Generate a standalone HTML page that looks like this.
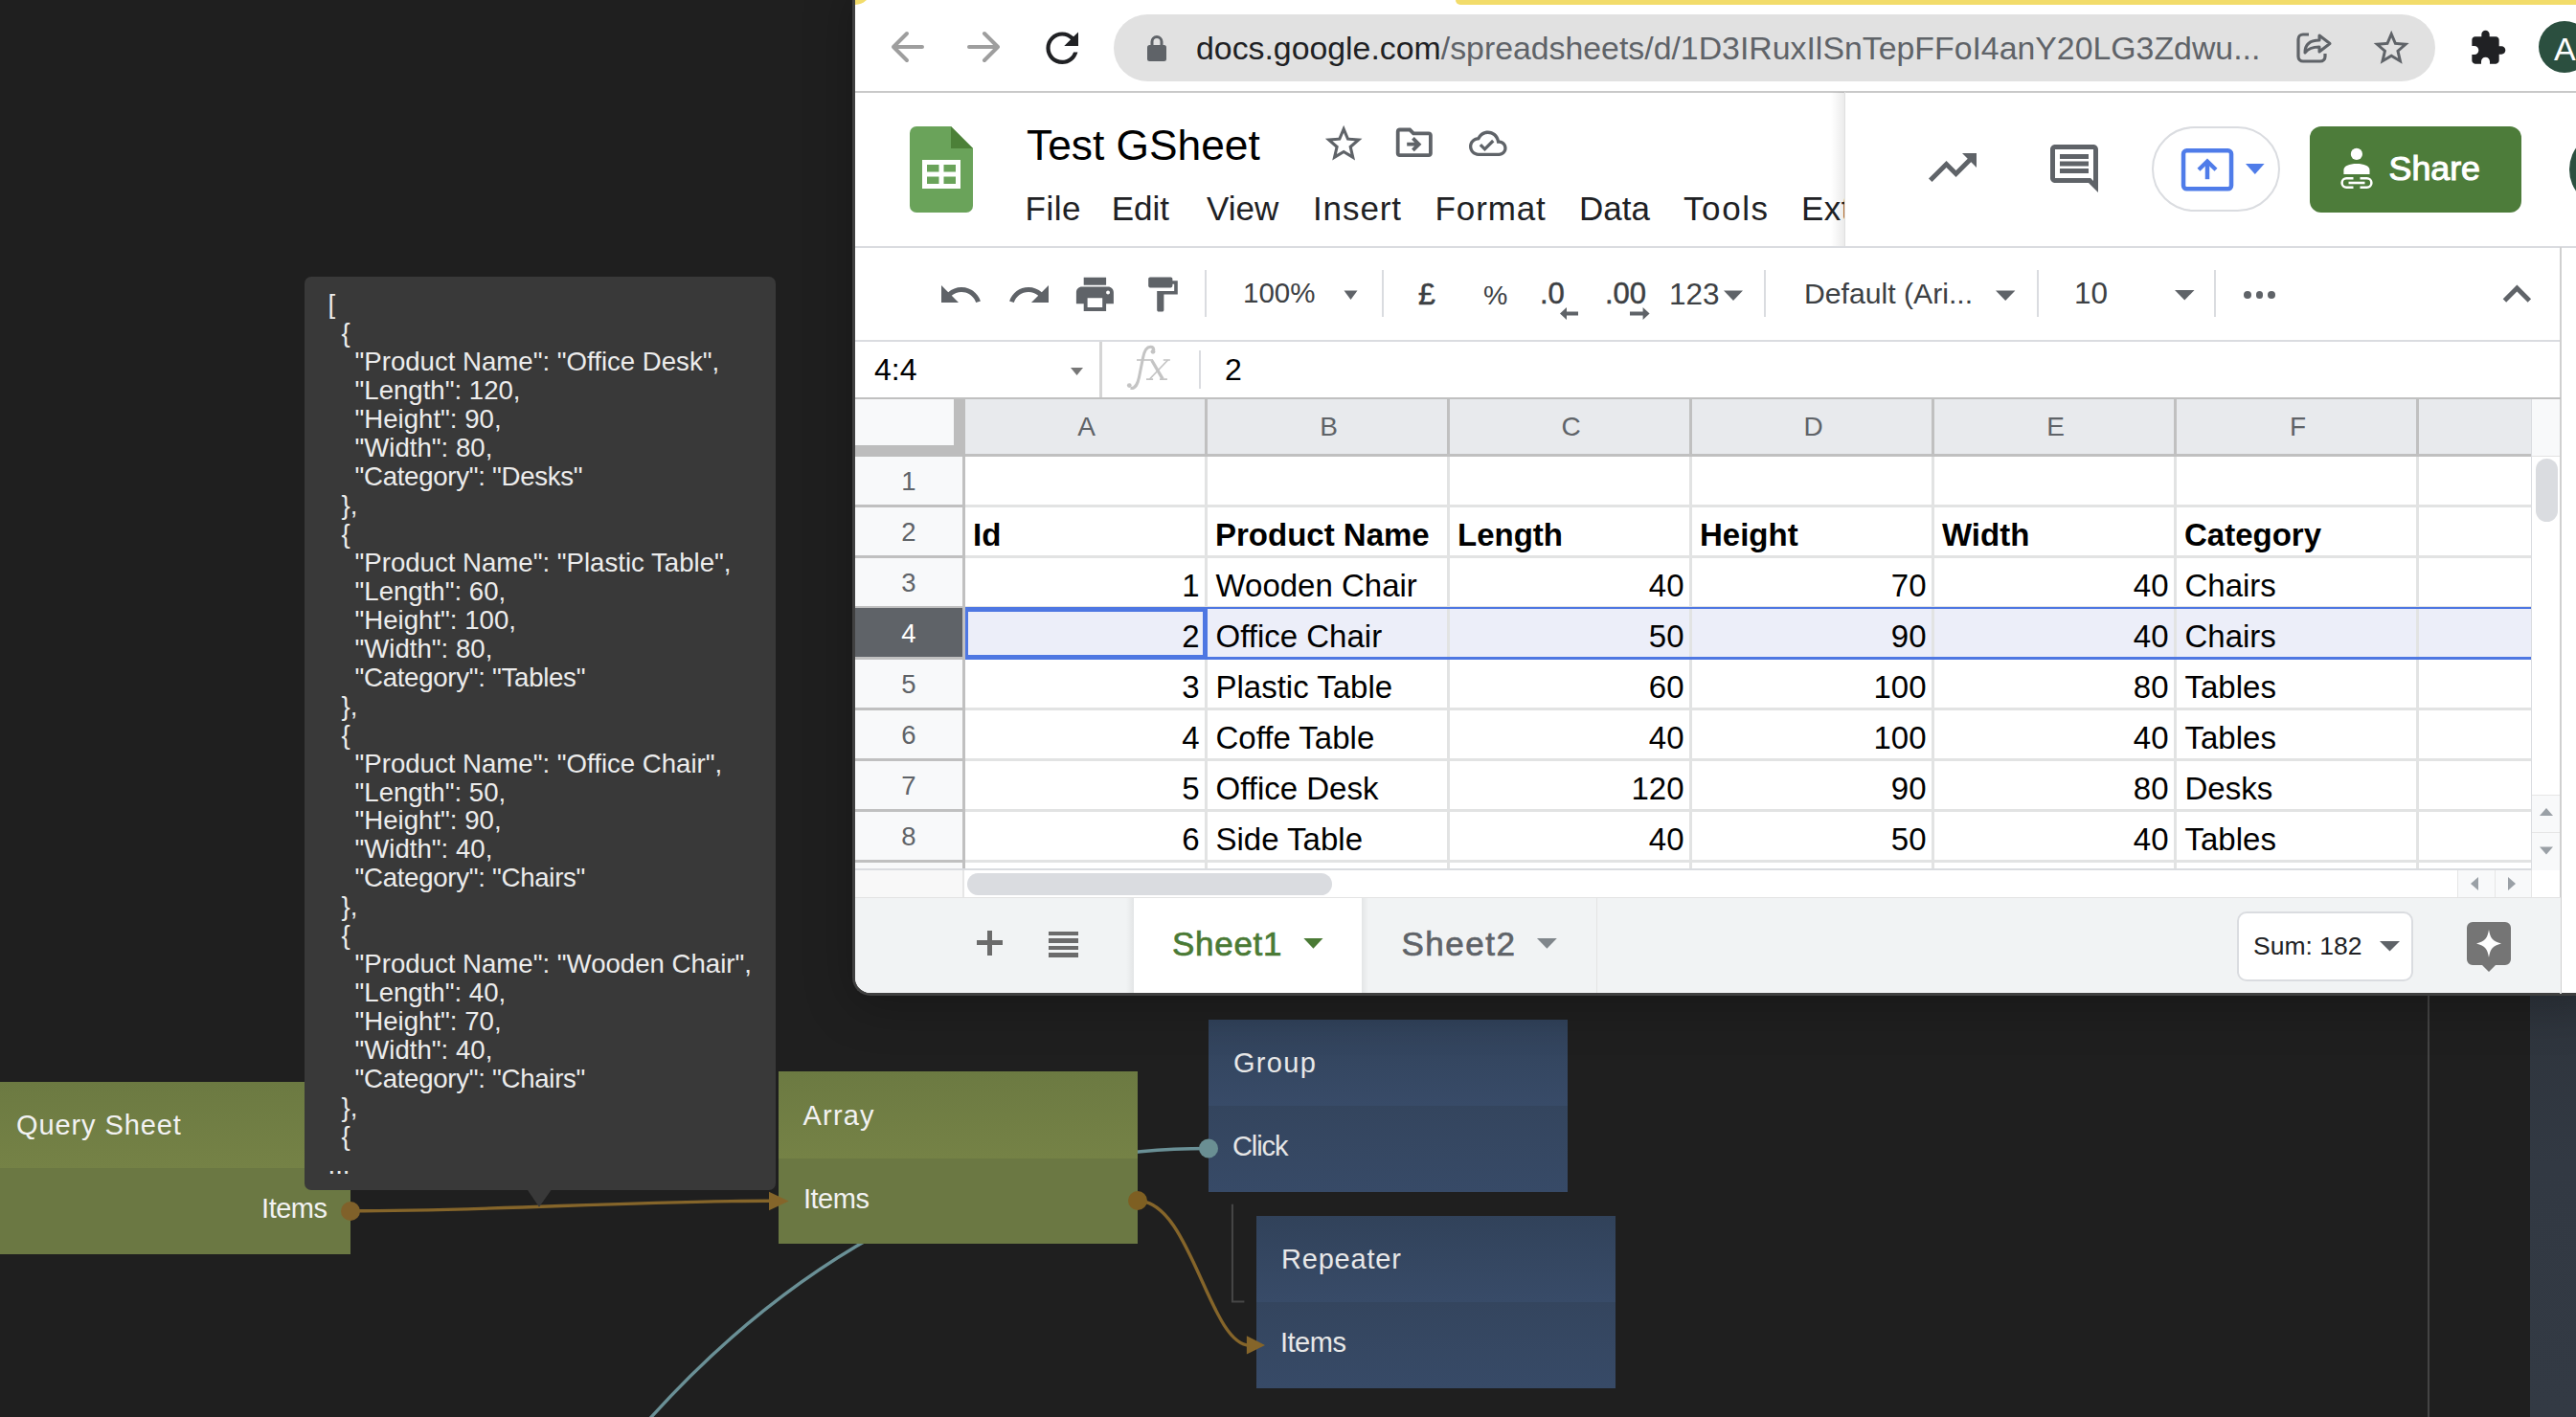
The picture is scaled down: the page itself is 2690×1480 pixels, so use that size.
<!DOCTYPE html>
<html><head><meta charset="utf-8"><title>Noodl + Google Sheets</title>
<style>
html,body{margin:0;padding:0;}
body{width:2690px;height:1480px;position:relative;overflow:hidden;background:#1f1f1f;font-family:"Liberation Sans",sans-serif;}
</style></head><body>
<div style="position:absolute;left:2535px;top:1040px;width:2px;height:440px;background:#444444"></div><div style="position:absolute;left:2642px;top:1040px;width:48px;height:440px;background:linear-gradient(#2e343c 0%,#323943 40%,#333a44 100%)"></div><svg style="position:absolute;left:0;top:0" width="2690" height="1480" viewBox="0 0 2690 1480">
<path d="M428.2,1876.9 C730.7,1215.5 1143.3,1199.5 1262,1199.5" fill="none" stroke="#6a9096" stroke-width="3.4"/>
</svg><div style="position:absolute;left:-10px;top:1130px;width:376px;height:90px;background:linear-gradient(#6c7a42,#758246)"></div><div style="position:absolute;left:-10px;top:1220px;width:376px;height:90px;background:#6b7843"></div><div style="position:absolute;left:17px;top:1158.5px;font-family:'Liberation Sans',sans-serif;font-size:29px;line-height:33.3px;color:#f2f2f2;font-weight:400;white-space:pre;letter-spacing:0.9px">Query Sheet</div><div style="position:absolute;right:2348.5px;top:1246.2px;font-family:'Liberation Sans',sans-serif;font-size:29px;line-height:33.3px;color:#f2f2f2;font-weight:400;white-space:pre;text-align:right;letter-spacing:-0.5px">Items</div><div style="position:absolute;left:813px;top:1119px;width:375px;height:90.5px;background:linear-gradient(#6c7a42,#758246)"></div><div style="position:absolute;left:813px;top:1209.5px;width:375px;height:89.5px;background:#6b7843"></div><div style="position:absolute;left:838.5px;top:1148.8px;font-family:'Liberation Sans',sans-serif;font-size:29px;line-height:33.3px;color:#f2f2f2;font-weight:400;white-space:pre;letter-spacing:1.2px">Array</div><div style="position:absolute;left:839px;top:1235.8px;font-family:'Liberation Sans',sans-serif;font-size:29px;line-height:33.3px;color:#f2f2f2;font-weight:400;white-space:pre;letter-spacing:-0.5px">Items</div><div style="position:absolute;left:1262px;top:1065px;width:375px;height:90px;background:linear-gradient(#31425a,#384b68)"></div><div style="position:absolute;left:1262px;top:1155px;width:375px;height:90px;background:linear-gradient(#34455e,#374a67)"></div><div style="position:absolute;left:1288px;top:1094.4px;font-family:'Liberation Sans',sans-serif;font-size:29px;line-height:33.3px;color:#e8e8e8;font-weight:400;white-space:pre;letter-spacing:1.3px">Group</div><div style="position:absolute;left:1287px;top:1180.8px;font-family:'Liberation Sans',sans-serif;font-size:29px;line-height:33.3px;color:#e6e6e6;font-weight:400;white-space:pre;letter-spacing:-1.1px">Click</div><div style="position:absolute;left:1312px;top:1270px;width:375px;height:90px;background:linear-gradient(#31425a,#384b68)"></div><div style="position:absolute;left:1312px;top:1360px;width:375px;height:89.5px;background:linear-gradient(#34455e,#374a67)"></div><div style="position:absolute;left:1338px;top:1299.1px;font-family:'Liberation Sans',sans-serif;font-size:29px;line-height:33.3px;color:#e8e8e8;font-weight:400;white-space:pre;letter-spacing:0.8px">Repeater</div><div style="position:absolute;left:1337px;top:1386.1px;font-family:'Liberation Sans',sans-serif;font-size:29px;line-height:33.3px;color:#e8e8e8;font-weight:400;white-space:pre;letter-spacing:-0.5px">Items</div><svg style="position:absolute;left:0;top:0" width="2690" height="1480" viewBox="0 0 2690 1480">
<path d="M1286.9,1257.8 V1359.5 H1299.4" fill="none" stroke="#474747" stroke-width="2"/>
<path d="M366.2,1264.8 C516.2,1264.8 656,1254.3 806,1254.3" fill="none" stroke="#85652a" stroke-width="3.4"/>
<path d="M803,1244.7 L823.6,1254.4 L803,1264.2 Z" fill="#85652a"/>
<path d="M1188.3,1254.2 C1243.5,1254.2 1262.8,1405.1 1305,1405.1" fill="none" stroke="#85652a" stroke-width="3.4"/>
<path d="M1301.9,1395.2 L1321,1405.1 L1301.9,1414.6 Z" fill="#85652a"/>
<circle cx="366" cy="1265" r="10" fill="#80612a"/>
<circle cx="1188" cy="1254" r="10" fill="#7e5f22"/>
<circle cx="1262" cy="1199.5" r="10" fill="#6a8f93"/>
</svg><div style="position:absolute;left:317.5px;top:288.5px;width:492px;height:954.5px;background:#393939;border-radius:7px"></div><svg style="position:absolute;left:0;top:0" width="2690" height="1480" viewBox="0 0 2690 1480"><path d="M551,1243 L575.5,1243 L563,1260.7 Z" fill="#393939"/></svg><div style="position:absolute;left:342.5px;top:302.3px;font-family:'Liberation Sans',sans-serif;font-size:27.6px;line-height:31.7px;color:#ececec;font-weight:400;white-space:pre;">[</div><div style="position:absolute;left:356.5px;top:332.3px;font-family:'Liberation Sans',sans-serif;font-size:27.6px;line-height:31.7px;color:#ececec;font-weight:400;white-space:pre;">{</div><div style="position:absolute;left:370.5px;top:362.2px;font-family:'Liberation Sans',sans-serif;font-size:27.6px;line-height:31.7px;color:#ececec;font-weight:400;white-space:pre;">&quot;Product Name&quot;: &quot;Office Desk&quot;,</div><div style="position:absolute;left:370.5px;top:392.2px;font-family:'Liberation Sans',sans-serif;font-size:27.6px;line-height:31.7px;color:#ececec;font-weight:400;white-space:pre;">&quot;Length&quot;: 120,</div><div style="position:absolute;left:370.5px;top:422.1px;font-family:'Liberation Sans',sans-serif;font-size:27.6px;line-height:31.7px;color:#ececec;font-weight:400;white-space:pre;">&quot;Height&quot;: 90,</div><div style="position:absolute;left:370.5px;top:452.1px;font-family:'Liberation Sans',sans-serif;font-size:27.6px;line-height:31.7px;color:#ececec;font-weight:400;white-space:pre;">&quot;Width&quot;: 80,</div><div style="position:absolute;left:370.5px;top:482.0px;font-family:'Liberation Sans',sans-serif;font-size:27.6px;line-height:31.7px;color:#ececec;font-weight:400;white-space:pre;letter-spacing:-0.28px">&quot;Category&quot;: &quot;Desks&quot;</div><div style="position:absolute;left:356.5px;top:512.0px;font-family:'Liberation Sans',sans-serif;font-size:27.6px;line-height:31.7px;color:#ececec;font-weight:400;white-space:pre;">},</div><div style="position:absolute;left:356.5px;top:541.9px;font-family:'Liberation Sans',sans-serif;font-size:27.6px;line-height:31.7px;color:#ececec;font-weight:400;white-space:pre;">{</div><div style="position:absolute;left:370.5px;top:571.9px;font-family:'Liberation Sans',sans-serif;font-size:27.6px;line-height:31.7px;color:#ececec;font-weight:400;white-space:pre;">&quot;Product Name&quot;: &quot;Plastic Table&quot;,</div><div style="position:absolute;left:370.5px;top:601.8px;font-family:'Liberation Sans',sans-serif;font-size:27.6px;line-height:31.7px;color:#ececec;font-weight:400;white-space:pre;">&quot;Length&quot;: 60,</div><div style="position:absolute;left:370.5px;top:631.8px;font-family:'Liberation Sans',sans-serif;font-size:27.6px;line-height:31.7px;color:#ececec;font-weight:400;white-space:pre;">&quot;Height&quot;: 100,</div><div style="position:absolute;left:370.5px;top:661.7px;font-family:'Liberation Sans',sans-serif;font-size:27.6px;line-height:31.7px;color:#ececec;font-weight:400;white-space:pre;">&quot;Width&quot;: 80,</div><div style="position:absolute;left:370.5px;top:691.7px;font-family:'Liberation Sans',sans-serif;font-size:27.6px;line-height:31.7px;color:#ececec;font-weight:400;white-space:pre;letter-spacing:-0.28px">&quot;Category&quot;: &quot;Tables&quot;</div><div style="position:absolute;left:356.5px;top:721.6px;font-family:'Liberation Sans',sans-serif;font-size:27.6px;line-height:31.7px;color:#ececec;font-weight:400;white-space:pre;">},</div><div style="position:absolute;left:356.5px;top:751.6px;font-family:'Liberation Sans',sans-serif;font-size:27.6px;line-height:31.7px;color:#ececec;font-weight:400;white-space:pre;">{</div><div style="position:absolute;left:370.5px;top:781.5px;font-family:'Liberation Sans',sans-serif;font-size:27.6px;line-height:31.7px;color:#ececec;font-weight:400;white-space:pre;">&quot;Product Name&quot;: &quot;Office Chair&quot;,</div><div style="position:absolute;left:370.5px;top:811.5px;font-family:'Liberation Sans',sans-serif;font-size:27.6px;line-height:31.7px;color:#ececec;font-weight:400;white-space:pre;">&quot;Length&quot;: 50,</div><div style="position:absolute;left:370.5px;top:841.4px;font-family:'Liberation Sans',sans-serif;font-size:27.6px;line-height:31.7px;color:#ececec;font-weight:400;white-space:pre;">&quot;Height&quot;: 90,</div><div style="position:absolute;left:370.5px;top:871.4px;font-family:'Liberation Sans',sans-serif;font-size:27.6px;line-height:31.7px;color:#ececec;font-weight:400;white-space:pre;">&quot;Width&quot;: 40,</div><div style="position:absolute;left:370.5px;top:901.3px;font-family:'Liberation Sans',sans-serif;font-size:27.6px;line-height:31.7px;color:#ececec;font-weight:400;white-space:pre;letter-spacing:-0.28px">&quot;Category&quot;: &quot;Chairs&quot;</div><div style="position:absolute;left:356.5px;top:931.3px;font-family:'Liberation Sans',sans-serif;font-size:27.6px;line-height:31.7px;color:#ececec;font-weight:400;white-space:pre;">},</div><div style="position:absolute;left:356.5px;top:961.2px;font-family:'Liberation Sans',sans-serif;font-size:27.6px;line-height:31.7px;color:#ececec;font-weight:400;white-space:pre;">{</div><div style="position:absolute;left:370.5px;top:991.2px;font-family:'Liberation Sans',sans-serif;font-size:27.6px;line-height:31.7px;color:#ececec;font-weight:400;white-space:pre;">&quot;Product Name&quot;: &quot;Wooden Chair&quot;,</div><div style="position:absolute;left:370.5px;top:1021.1px;font-family:'Liberation Sans',sans-serif;font-size:27.6px;line-height:31.7px;color:#ececec;font-weight:400;white-space:pre;">&quot;Length&quot;: 40,</div><div style="position:absolute;left:370.5px;top:1051.1px;font-family:'Liberation Sans',sans-serif;font-size:27.6px;line-height:31.7px;color:#ececec;font-weight:400;white-space:pre;">&quot;Height&quot;: 70,</div><div style="position:absolute;left:370.5px;top:1081.0px;font-family:'Liberation Sans',sans-serif;font-size:27.6px;line-height:31.7px;color:#ececec;font-weight:400;white-space:pre;">&quot;Width&quot;: 40,</div><div style="position:absolute;left:370.5px;top:1111.0px;font-family:'Liberation Sans',sans-serif;font-size:27.6px;line-height:31.7px;color:#ececec;font-weight:400;white-space:pre;letter-spacing:-0.28px">&quot;Category&quot;: &quot;Chairs&quot;</div><div style="position:absolute;left:356.5px;top:1140.9px;font-family:'Liberation Sans',sans-serif;font-size:27.6px;line-height:31.7px;color:#ececec;font-weight:400;white-space:pre;">},</div><div style="position:absolute;left:356.5px;top:1170.9px;font-family:'Liberation Sans',sans-serif;font-size:27.6px;line-height:31.7px;color:#ececec;font-weight:400;white-space:pre;">{</div><div style="position:absolute;left:342.5px;top:1200.8px;font-family:'Liberation Sans',sans-serif;font-size:27.6px;line-height:31.7px;color:#ececec;font-weight:400;white-space:pre;">...</div><div style="position:absolute;left:890px;top:-20px;width:1820px;height:1057px;background:#ffffff;border-left:3px solid #404040;border-bottom:3px solid #404040;border-bottom-left-radius:19px;overflow:hidden;box-shadow:0 10px 50px rgba(0,0,0,0.25)"></div><div style="position:absolute;left:893px;top:-10px;width:16px;height:15px;background:#f2dc6b;border-bottom-right-radius:16px 15px"></div><div style="position:absolute;left:1520px;top:0px;width:1170px;height:5px;background:#f2dc6b;border-bottom-left-radius:6px"></div><svg style="position:absolute;left:0;top:0" width="2690" height="120" viewBox="0 0 2690 120">
<g fill="none" stroke="#9e9e9e" stroke-width="4" stroke-linecap="round" stroke-linejoin="round">
<path d="M947,35 L933,49 L947,63 M933,49 H963"/>
<path d="M1028,35 L1042,49 L1028,63 M1042,49 H1012"/>
</g>
</svg><svg style="position:absolute;left:1083.6px;top:24.6px" width="50.4" height="50.4" viewBox="0 0 24 24"><path d="M17.65 6.35C16.2 4.9 14.21 4 12 4c-4.42 0-7.99 3.58-7.99 8s3.57 8 7.99 8c3.73 0 6.84-2.55 7.73-6h-2.08c-.82 2.33-3.04 4-5.65 4-3.31 0-6-2.69-6-6s2.69-6 6-6c1.66 0 3.14.69 4.22 1.78L13 11h7V4l-2.35 2.35z" fill="#202124" /></svg><div style="position:absolute;left:1163px;top:15px;width:1380px;height:70px;background:#e1e1e1;border-radius:35px"></div><svg style="position:absolute;left:1190px;top:30px" width="36" height="40" viewBox="0 0 36 40">
<path d="M13,18 V13.5 A5,5 0 0 1 23,13.5 V18" fill="none" stroke="#5f6368" stroke-width="3"/>
<rect x="8" y="17" width="20" height="17" rx="2.5" fill="#5f6368"/>
</svg><div style="position:absolute;left:1249px;top:31.4px;font-family:'Liberation Sans',sans-serif;font-size:33.85px;line-height:38.9px;color:#5f6368;font-weight:400;white-space:pre;"><span style="color:#202124">docs.google.com</span>/spreadsheets/d/1D3IRuxIlSnTepFFoI4anY20LG3Zdwu...</div><svg style="position:absolute;left:2395px;top:28px" width="46" height="42" viewBox="0 0 46 42">
<path d="M16,8 H10 A5,5 0 0 0 5,13 V31 A5,5 0 0 0 10,36 H28 A5,5 0 0 0 33,31 V28" fill="none" stroke="#5f6368" stroke-width="3.2"/>
<path d="M12,27 C12,18 18,14 27,14 V9 L38,17.5 L27,26 V21 C20,21 15,23 12,27 Z" fill="none" stroke="#5f6368" stroke-width="3" stroke-linejoin="round"/>
</svg><svg style="position:absolute;left:2475.3px;top:28.3px" width="44.4" height="44.4" viewBox="0 0 24 24"><path d="M22 9.24l-7.19-.62L12 2 9.19 8.63 2 9.24l5.46 4.73L5.82 21 12 17.27 18.18 21l-1.63-7.03L22 9.24zM12 15.4l-3.76 2.27 1-4.28-3.32-2.88 4.38-.38L12 6.1l1.71 4.04 4.38.38-3.32 2.88 1 4.28L12 15.4z" fill="#5f6368" /></svg><svg style="position:absolute;left:2577.7px;top:30.3px" width="40.0" height="40.0" viewBox="0 0 24 24"><path d="M20.5 11H19V7c0-1.1-.9-2-2-2h-4V3.5C13 2.12 11.88 1 10.5 1S8 2.12 8 3.5V5H4c-1.1 0-1.99.9-1.99 2v3.8H3.5c1.49 0 2.7 1.21 2.7 2.7s-1.21 2.7-2.7 2.7H2V20c0 1.1.9 2 2 2h3.8v-1.5c0-1.49 1.21-2.7 2.7-2.7 1.49 0 2.7 1.21 2.7 2.7V22H17c1.1 0 2-.9 2-2v-4h1.5c1.38 0 2.5-1.12 2.5-2.5S21.88 11 20.5 11z" fill="#202124" /></svg><div style="position:absolute;left:2651px;top:22px;width:54px;height:54px;background:#2b4f3f;border-radius:50%"></div><div style="position:absolute;left:2667px;top:32.2px;font-family:'Liberation Sans',sans-serif;font-size:34px;line-height:39.1px;color:#ffffff;font-weight:400;white-space:pre;">A</div><div style="position:absolute;left:893px;top:95px;width:1797px;height:2px;background:#c9c9c9"></div><svg style="position:absolute;left:950px;top:132px" width="66" height="90" viewBox="0 0 66 90">
<path d="M7,0 H43 L66,23 V83 A7,7 0 0 1 59,90 H7 A7,7 0 0 1 0,83 V7 A7,7 0 0 1 7,0 Z" fill="#6aa35a"/>
<path d="M43,0 L66,23 H43 Z" fill="#4c8038"/>
<rect x="13" y="35" width="40" height="30" fill="#ffffff"/>
<rect x="18" y="40" width="12.5" height="7.5" fill="#6aa35a"/>
<rect x="35.5" y="40" width="12.5" height="7.5" fill="#6aa35a"/>
<rect x="18" y="52.5" width="12.5" height="7.5" fill="#6aa35a"/>
<rect x="35.5" y="52.5" width="12.5" height="7.5" fill="#6aa35a"/>
</svg><div style="position:absolute;left:1072px;top:127.4px;font-family:'Liberation Sans',sans-serif;font-size:44.3px;line-height:50.9px;color:#000000;font-weight:400;white-space:pre;">Test GSheet</div><svg style="position:absolute;left:1380.0px;top:126.6px" width="46.3" height="46.3" viewBox="0 0 24 24"><path d="M22 9.24l-7.19-.62L12 2 9.19 8.63 2 9.24l5.46 4.73L5.82 21 12 17.27 18.18 21l-1.63-7.03L22 9.24zM12 15.4l-3.76 2.27 1-4.28-3.32-2.88 4.38-.38L12 6.1l1.71 4.04 4.38.38-3.32 2.88 1 4.28L12 15.4z" fill="#5f6368" /></svg><svg style="position:absolute;left:1454.2px;top:126.4px" width="45.6" height="45.6" viewBox="0 0 24 24"><path d="M20 6h-8l-2-2H4c-1.1 0-1.99.9-1.99 2L2 18c0 1.1.9 2 2 2h16c1.1 0 2-.9 2-2V8c0-1.1-.9-2-2-2zm0 12H4V6h5.17l2 2H20v10zm-7.84-6H8v2h4.16l-1.59 1.59L11.99 17 16 13.01 11.99 9l-1.41 1.41L12.16 12z" fill="#5f6368" /></svg><svg style="position:absolute;left:1534.0px;top:130.4px" width="39.6" height="39.6" viewBox="0 0 24 24"><path d="M19.35 10.04C18.67 6.59 15.64 4 12 4 9.11 4 6.6 5.64 5.35 8.04 2.34 8.36 0 10.91 0 14c0 3.31 2.69 6 6 6h13c2.76 0 5-2.24 5-5 0-2.64-2.05-4.78-4.65-4.96zM19 18H6c-2.21 0-4-1.79-4-4 0-2.05 1.53-3.76 3.56-3.97l1.07-.11.5-.95C8.08 7.14 9.94 6 12 6c2.62 0 4.88 1.86 5.39 4.43l.3 1.5 1.53.11c1.56.1 2.78 1.41 2.78 2.96 0 1.65-1.35 3-3 3zm-9-3.82l-2.09-2.09L6.5 13.5 10 17l6.01-6.01-1.41-1.41z" fill="#5f6368" /></svg><div style="position:absolute;left:893px;top:180px;width:1033px;height:70px;overflow:hidden"><div style="position:absolute;left:177.5px;top:18.3px;font-family:'Liberation Sans',sans-serif;font-size:35px;line-height:40.2px;color:#202124;font-weight:400;white-space:pre;letter-spacing:0.5px">File</div><div style="position:absolute;left:267.70000000000005px;top:18.3px;font-family:'Liberation Sans',sans-serif;font-size:35px;line-height:40.2px;color:#202124;font-weight:400;white-space:pre;letter-spacing:0px">Edit</div><div style="position:absolute;left:367px;top:18.3px;font-family:'Liberation Sans',sans-serif;font-size:35px;line-height:40.2px;color:#202124;font-weight:400;white-space:pre;letter-spacing:0px">View</div><div style="position:absolute;left:478px;top:18.3px;font-family:'Liberation Sans',sans-serif;font-size:35px;line-height:40.2px;color:#202124;font-weight:400;white-space:pre;letter-spacing:0.9px">Insert</div><div style="position:absolute;left:605.5px;top:18.3px;font-family:'Liberation Sans',sans-serif;font-size:35px;line-height:40.2px;color:#202124;font-weight:400;white-space:pre;letter-spacing:0.9px">Format</div><div style="position:absolute;left:756px;top:18.3px;font-family:'Liberation Sans',sans-serif;font-size:35px;line-height:40.2px;color:#202124;font-weight:400;white-space:pre;letter-spacing:0px">Data</div><div style="position:absolute;left:865px;top:18.3px;font-family:'Liberation Sans',sans-serif;font-size:35px;line-height:40.2px;color:#202124;font-weight:400;white-space:pre;letter-spacing:1.6px">Tools</div><div style="position:absolute;left:988px;top:18.3px;font-family:'Liberation Sans',sans-serif;font-size:35px;line-height:40.2px;color:#202124;font-weight:400;white-space:pre;letter-spacing:0.5px">Extensions</div></div><div style="position:absolute;left:1912px;top:96px;width:14px;height:161px;background:linear-gradient(90deg,rgba(0,0,0,0),rgba(0,0,0,0.08))"></div><div style="position:absolute;left:1926px;top:96px;width:1px;height:161px;background:#e0e0e0"></div><svg style="position:absolute;left:2009.0px;top:145.0px" width="60.0" height="60.0" viewBox="0 0 24 24"><path d="M16 6l2.29 2.29-4.88 4.88-4-4L2 16.59 3.41 18l6-6 4 4 6.3-6.29L22 12V6z" fill="#5f6368" /></svg><svg style="position:absolute;left:2136.0px;top:146.0px" width="60.0" height="60.0" viewBox="0 0 24 24"><path d="M21.99 4c0-1.1-.89-2-1.99-2H4c-1.1 0-2 .9-2 2v12c0 1.1.9 2 2 2h14l4 4-.01-18zM20 4v13.17L18.83 16H4V4h16zM6 12h12v2H6zm0-3h12v2H6zm0-3h12v2H6z" fill="#5f6368" /></svg><div style="position:absolute;left:2247px;top:132px;width:134px;height:89px;box-sizing:border-box;border:2px solid #dadce0;border-radius:45px"></div><svg style="position:absolute;left:2270px;top:150px" width="100" height="56" viewBox="0 0 100 56">
<rect x="10.05" y="7.25" width="50" height="40.1" rx="3.5" fill="none" stroke="#4f7ce9" stroke-width="4.5"/>
<path d="M26,27.2 L35,18.5 L44,27.2" fill="none" stroke="#4f7ce9" stroke-width="4.3"/><path d="M35,19 V37.2" stroke="#4f7ce9" stroke-width="4.5"/>
<path d="M75,21 H94.6 L84.8,32 Z" fill="#4f7ce9"/>
</svg><div style="position:absolute;left:2412px;top:132px;width:221px;height:90px;background:#4d7c3a;border-radius:12px"></div><svg style="position:absolute;left:2440px;top:150px" width="44" height="52" viewBox="0 0 44 52">
<circle cx="20.9" cy="10.9" r="6.1" fill="#fff"/>
<path d="M7.4,32 V27.8 C7.4,23.3 13.5,21.1 21,21.1 C28.5,21.1 34.5,23.3 34.5,27.8 V32 Z" fill="#fff"/>
<path d="M17.5,36.3 H10.3 A4.7,4.7 0 0 0 10.3,45.7 H17.5 M24.5,36.3 H31.7 A4.7,4.7 0 0 1 31.7,45.7 H24.5" fill="none" stroke="#fff" stroke-width="2.5"/>
<path d="M12.5,41 H29.5" stroke="#fff" stroke-width="2.6"/>
</svg><div style="position:absolute;left:2494.5px;top:155.9px;font-family:'Liberation Sans',sans-serif;font-size:35.8px;line-height:41.2px;color:#ffffff;font-weight:400;white-space:pre;-webkit-text-stroke:1.1px #ffffff">Share</div><div style="position:absolute;left:2682.8px;top:136.8px;width:80px;height:80px;background:#2b4f3f;border-radius:50%"></div><div style="position:absolute;left:893px;top:257px;width:1797px;height:2px;background:#dadce0"></div><svg style="position:absolute;left:979.0px;top:284.0px" width="48.0" height="48.0" viewBox="0 0 24 24"><path d="M12.5 8c-2.65 0-5.05.99-6.9 2.6L2 7v9h9l-3.62-3.62c1.39-1.16 3.16-1.88 5.12-1.88 3.54 0 6.55 2.31 7.6 5.5l2.37-.78C21.08 11.03 17.15 8 12.5 8z" fill="#5f6368" /></svg><svg style="position:absolute;left:1051.0px;top:284.0px" width="48.0" height="48.0" viewBox="0 0 24 24"><path d="M18.4 10.6C16.55 8.99 14.15 8 11.5 8c-4.65 0-8.58 3.03-9.96 7.22L3.9 16c1.05-3.19 4.05-5.5 7.6-5.5 1.95 0 3.73.72 5.12 1.88L13 16h9V7l-3.6 3.6z" fill="#5f6368" /></svg><svg style="position:absolute;left:1120.0px;top:284.2px" width="46.8" height="46.8" viewBox="0 0 24 24"><path d="M19 8H5c-1.66 0-3 1.34-3 3v6h4v4h12v-4h4v-6c0-1.66-1.34-3-3-3zm-3 11H8v-5h8v5zm3-7c-.55 0-1-.45-1-1s.45-1 1-1 1 .45 1 1-.45 1-1 1zm-1-9H6v4h12V3z" fill="#5f6368" /></svg><svg style="position:absolute;left:1191.8px;top:286.4px" width="43.2" height="43.2" viewBox="0 0 24 24"><path d="M18 4V3c0-.55-.45-1-1-1H5c-.55 0-1 .45-1 1v4c0 .55.45 1 1 1h12c.55 0 1-.45 1-1V6h1v4H9v11c0 .55.45 1 1 1h2c.55 0 1-.45 1-1v-9h8V4h-3z" fill="#5f6368" /></svg><div style="position:absolute;left:1258px;top:282px;width:2px;height:49px;background:#dadce0"></div><div style="position:absolute;left:1443px;top:282px;width:2px;height:49px;background:#dadce0"></div><div style="position:absolute;left:1842px;top:282px;width:2px;height:49px;background:#dadce0"></div><div style="position:absolute;left:2127px;top:282px;width:2px;height:49px;background:#dadce0"></div><div style="position:absolute;left:2312px;top:282px;width:2px;height:49px;background:#dadce0"></div><div style="position:absolute;left:1298px;top:289.3px;font-family:'Liberation Sans',sans-serif;font-size:29.5px;line-height:33.9px;color:#3c4043;font-weight:400;white-space:pre;">100%</div><svg style="position:absolute;left:0;top:0;overflow:visible" width="1" height="1"><path d="M1403.5,303.5 H1417.5 L1410.5,313 Z" fill="#5f6368"/></svg><div style="position:absolute;left:1481px;top:288.5px;font-family:'Liberation Sans',sans-serif;font-size:32px;line-height:36.8px;color:#3c4043;font-weight:400;white-space:pre;-webkit-text-stroke:0.6px #3c4043">£</div><div style="position:absolute;left:1549px;top:291.7px;font-family:'Liberation Sans',sans-serif;font-size:28.5px;line-height:32.8px;color:#3c4043;font-weight:400;white-space:pre;">%</div><div style="position:absolute;left:1608px;top:289.4px;font-family:'Liberation Sans',sans-serif;font-size:31px;line-height:35.6px;color:#3c4043;font-weight:400;white-space:pre;-webkit-text-stroke:0.5px #3c4043">.0</div><div style="position:absolute;left:1676px;top:289.4px;font-family:'Liberation Sans',sans-serif;font-size:31px;line-height:35.6px;color:#3c4043;font-weight:400;white-space:pre;-webkit-text-stroke:0.5px #3c4043">.00</div><svg style="position:absolute;left:0;top:0;overflow:visible" width="1" height="1">
<path d="M1629,327.5 L1636,321 V325.5 H1648 V329.5 H1636 V334 Z" fill="#5f6368"/>
<path d="M1722.6,327.5 L1715.6,321 V325.5 H1702 V329.5 H1715.6 V334 Z" fill="#5f6368"/>
</svg><div style="position:absolute;left:1743px;top:289.0px;font-family:'Liberation Sans',sans-serif;font-size:31.5px;line-height:36.2px;color:#3c4043;font-weight:400;white-space:pre;">123</div><svg style="position:absolute;left:0;top:0;overflow:visible" width="1" height="1"><path d="M1800,303.5 H1820 L1810.0,314 Z" fill="#5f6368"/></svg><div style="position:absolute;left:1884px;top:290.2px;font-family:'Liberation Sans',sans-serif;font-size:30.2px;line-height:34.7px;color:#3c4043;font-weight:400;white-space:pre;">Default (Ari...</div><svg style="position:absolute;left:0;top:0;overflow:visible" width="1" height="1"><path d="M2084,303.5 H2104.4 L2094.2,314 Z" fill="#5f6368"/></svg><div style="position:absolute;left:2166px;top:287.5px;font-family:'Liberation Sans',sans-serif;font-size:31.5px;line-height:36.2px;color:#3c4043;font-weight:400;white-space:pre;">10</div><svg style="position:absolute;left:0;top:0;overflow:visible" width="1" height="1"><path d="M2271,303 H2291.5 L2281.25,313.6 Z" fill="#5f6368"/></svg><div style="position:absolute;left:2342.9px;top:303.8px;width:7.8px;height:7.8px;background:#5f6368;border-radius:50%"></div><div style="position:absolute;left:2355.6px;top:303.8px;width:7.8px;height:7.8px;background:#5f6368;border-radius:50%"></div><div style="position:absolute;left:2368.2999999999997px;top:303.8px;width:7.8px;height:7.8px;background:#5f6368;border-radius:50%"></div><svg style="position:absolute;left:2599.3px;top:278.4px" width="58.8" height="58.8" viewBox="0 0 24 24"><path d="M12 8l-6 6 1.41 1.41L12 10.83l4.59 4.58L18 14z" fill="#5f6368" /></svg><div style="position:absolute;left:893px;top:355px;width:1781px;height:2px;background:#dadce0"></div><div style="position:absolute;left:2673px;top:258px;width:2px;height:780px;background:#d0d0d0"></div><div style="position:absolute;left:913px;top:367.6px;font-family:'Liberation Sans',sans-serif;font-size:32px;line-height:36.8px;color:#000000;font-weight:400;white-space:pre;">4:4</div><svg style="position:absolute;left:0;top:0;overflow:visible" width="1" height="1"><path d="M1118,384 H1131 L1124.5,392 Z" fill="#777"/></svg><div style="position:absolute;left:1148px;top:357px;width:3px;height:58px;background:#d5d5d5"></div><svg style="position:absolute;left:0;top:0;overflow:visible" width="1" height="1">
<g fill="none" stroke="#c4c4c4" stroke-linecap="butt">
<path d="M1180.5,405.5 C1186,406 1188,401 1189.5,394 L1193.5,374 C1195,366 1197.5,362.3 1201.3,362.3 C1203.5,362.3 1204.8,363.8 1204.8,366" stroke-width="3.1"/>
<path d="M1187,376 H1204" stroke-width="1.7"/>
<path d="M1202.8,376.5 L1214.2,395.8" stroke-width="3.3"/>
<path d="M1219.6,376 L1200.5,396" stroke-width="1.7"/>
<path d="M1214.8,376 H1221.9 M1197,396.2 H1204.1 M1211,396.2 H1218.9" stroke-width="1.7"/>
</g>
<circle cx="1179.3" cy="402.6" r="2.4" fill="#c4c4c4"/>
<circle cx="1204" cy="367.3" r="2.4" fill="#c4c4c4"/>
</svg><div style="position:absolute;left:1252px;top:366px;width:2px;height:40px;background:#dadce0"></div><div style="position:absolute;left:1279px;top:367.6px;font-family:'Liberation Sans',sans-serif;font-size:32px;line-height:36.8px;color:#000000;font-weight:400;white-space:pre;">2</div><div style="position:absolute;left:893px;top:415px;width:1781px;height:2px;background:#c0c0c0"></div><div style="position:absolute;left:893px;top:417px;width:103px;height:48px;background:#f8f9fa"></div><div style="position:absolute;left:1008px;top:417px;width:1635px;height:57px;background:#e8eaed"></div><div style="position:absolute;left:1008px;top:474px;width:1635px;height:3px;background:#c0c0c0"></div><div style="position:absolute;left:996px;top:417px;width:12px;height:60px;background:#bdbdbd"></div><div style="position:absolute;left:893px;top:465px;width:115px;height:12px;background:#bdbdbd"></div><div style="position:absolute;left:1258px;top:417px;width:3px;height:57px;background:#c0c0c0"></div><div style="position:absolute;left:1511px;top:417px;width:3px;height:57px;background:#c0c0c0"></div><div style="position:absolute;left:1764px;top:417px;width:3px;height:57px;background:#c0c0c0"></div><div style="position:absolute;left:2017px;top:417px;width:3px;height:57px;background:#c0c0c0"></div><div style="position:absolute;left:2270px;top:417px;width:3px;height:57px;background:#c0c0c0"></div><div style="position:absolute;left:2523px;top:417px;width:3px;height:57px;background:#c0c0c0"></div><div style="position:absolute;left:1009.5px;width:250px;top:430.0px;font-size:28px;line-height:32px;text-align:center;color:#5f6368">A</div><div style="position:absolute;left:1262.5px;width:250px;top:430.0px;font-size:28px;line-height:32px;text-align:center;color:#5f6368">B</div><div style="position:absolute;left:1515.5px;width:250px;top:430.0px;font-size:28px;line-height:32px;text-align:center;color:#5f6368">C</div><div style="position:absolute;left:1768.5px;width:250px;top:430.0px;font-size:28px;line-height:32px;text-align:center;color:#5f6368">D</div><div style="position:absolute;left:2021.5px;width:250px;top:430.0px;font-size:28px;line-height:32px;text-align:center;color:#5f6368">E</div><div style="position:absolute;left:2274.5px;width:250px;top:430.0px;font-size:28px;line-height:32px;text-align:center;color:#5f6368">F</div><div style="position:absolute;left:1008px;top:477px;width:1635px;height:432px;background:#ffffff"></div><div style="position:absolute;left:893px;top:477px;width:112px;height:432px;background:#f8f9fa"></div><div style="position:absolute;left:1005px;top:477px;width:3px;height:432px;background:#c0c0c0"></div><div style="position:absolute;left:1008px;top:636px;width:1635px;height:50px;background:#eceef9"></div><div style="position:absolute;left:893px;top:527px;width:112px;height:3px;background:#c0c0c0"></div><div style="position:absolute;left:1008px;top:527px;width:1635px;height:3px;background:#e2e3e3"></div><div style="position:absolute;left:893px;top:580px;width:112px;height:3px;background:#c0c0c0"></div><div style="position:absolute;left:1008px;top:580px;width:1635px;height:3px;background:#e2e3e3"></div><div style="position:absolute;left:893px;top:633px;width:112px;height:3px;background:#c0c0c0"></div><div style="position:absolute;left:1008px;top:633px;width:1635px;height:3px;background:#e2e3e3"></div><div style="position:absolute;left:893px;top:686px;width:112px;height:3px;background:#c0c0c0"></div><div style="position:absolute;left:1008px;top:686px;width:1635px;height:3px;background:#e2e3e3"></div><div style="position:absolute;left:893px;top:739px;width:112px;height:3px;background:#c0c0c0"></div><div style="position:absolute;left:1008px;top:739px;width:1635px;height:3px;background:#e2e3e3"></div><div style="position:absolute;left:893px;top:792px;width:112px;height:3px;background:#c0c0c0"></div><div style="position:absolute;left:1008px;top:792px;width:1635px;height:3px;background:#e2e3e3"></div><div style="position:absolute;left:893px;top:845px;width:112px;height:3px;background:#c0c0c0"></div><div style="position:absolute;left:1008px;top:845px;width:1635px;height:3px;background:#e2e3e3"></div><div style="position:absolute;left:893px;top:898px;width:112px;height:3px;background:#c0c0c0"></div><div style="position:absolute;left:1008px;top:898px;width:1635px;height:3px;background:#e2e3e3"></div><div style="position:absolute;left:893px;top:951px;width:112px;height:3px;background:#c0c0c0"></div><div style="position:absolute;left:1008px;top:951px;width:1635px;height:3px;background:#e2e3e3"></div><div style="position:absolute;left:893px;top:907px;width:1750px;height:2px;background:#dadce0"></div><div style="position:absolute;left:1258px;top:477px;width:3px;height:430px;background:#e2e3e3"></div><div style="position:absolute;left:1511px;top:477px;width:3px;height:430px;background:#e2e3e3"></div><div style="position:absolute;left:1764px;top:477px;width:3px;height:430px;background:#e2e3e3"></div><div style="position:absolute;left:2017px;top:477px;width:3px;height:430px;background:#e2e3e3"></div><div style="position:absolute;left:2270px;top:477px;width:3px;height:430px;background:#e2e3e3"></div><div style="position:absolute;left:2523px;top:477px;width:3px;height:430px;background:#e2e3e3"></div><div style="position:absolute;left:2643px;top:417px;width:1px;height:492px;background:#dadce0"></div><div style="position:absolute;left:893px;width:112px;top:486.7px;font-size:27.5px;line-height:31px;text-align:center;color:#5f6368">1</div><div style="position:absolute;left:893px;width:112px;top:539.7px;font-size:27.5px;line-height:31px;text-align:center;color:#5f6368">2</div><div style="position:absolute;left:893px;width:112px;top:592.7px;font-size:27.5px;line-height:31px;text-align:center;color:#5f6368">3</div><div style="position:absolute;left:893px;top:635px;width:112px;height:51px;background:#5f6368"></div><div style="position:absolute;left:893px;width:112px;top:645.7px;font-size:27.5px;line-height:31px;text-align:center;color:#ffffff">4</div><div style="position:absolute;left:893px;width:112px;top:698.7px;font-size:27.5px;line-height:31px;text-align:center;color:#5f6368">5</div><div style="position:absolute;left:893px;width:112px;top:751.7px;font-size:27.5px;line-height:31px;text-align:center;color:#5f6368">6</div><div style="position:absolute;left:893px;width:112px;top:804.7px;font-size:27.5px;line-height:31px;text-align:center;color:#5f6368">7</div><div style="position:absolute;left:893px;width:112px;top:857.7px;font-size:27.5px;line-height:31px;text-align:center;color:#5f6368">8</div><div style="position:absolute;left:1016px;top:539.6px;font-family:'Liberation Sans',sans-serif;font-size:33px;line-height:37.9px;color:#000;font-weight:700;white-space:pre;">Id</div><div style="position:absolute;left:1269px;top:539.6px;font-family:'Liberation Sans',sans-serif;font-size:33px;line-height:37.9px;color:#000;font-weight:700;white-space:pre;">Product Name</div><div style="position:absolute;left:1522px;top:539.6px;font-family:'Liberation Sans',sans-serif;font-size:33px;line-height:37.9px;color:#000;font-weight:700;white-space:pre;">Length</div><div style="position:absolute;left:1775px;top:539.6px;font-family:'Liberation Sans',sans-serif;font-size:33px;line-height:37.9px;color:#000;font-weight:700;white-space:pre;">Height</div><div style="position:absolute;left:2028px;top:539.6px;font-family:'Liberation Sans',sans-serif;font-size:33px;line-height:37.9px;color:#000;font-weight:700;white-space:pre;">Width</div><div style="position:absolute;left:2281px;top:539.6px;font-family:'Liberation Sans',sans-serif;font-size:33px;line-height:37.9px;color:#000;font-weight:700;white-space:pre;">Category</div><div style="position:absolute;right:1437.5px;top:592.6px;font-family:'Liberation Sans',sans-serif;font-size:33px;line-height:37.9px;color:#000;font-weight:400;white-space:pre;text-align:right;">1</div><div style="position:absolute;left:1269.5px;top:592.6px;font-family:'Liberation Sans',sans-serif;font-size:33px;line-height:37.9px;color:#000;font-weight:400;white-space:pre;">Wooden Chair</div><div style="position:absolute;right:931.5px;top:592.6px;font-family:'Liberation Sans',sans-serif;font-size:33px;line-height:37.9px;color:#000;font-weight:400;white-space:pre;text-align:right;">40</div><div style="position:absolute;right:678.5px;top:592.6px;font-family:'Liberation Sans',sans-serif;font-size:33px;line-height:37.9px;color:#000;font-weight:400;white-space:pre;text-align:right;">70</div><div style="position:absolute;right:425.5px;top:592.6px;font-family:'Liberation Sans',sans-serif;font-size:33px;line-height:37.9px;color:#000;font-weight:400;white-space:pre;text-align:right;">40</div><div style="position:absolute;left:2281.5px;top:592.6px;font-family:'Liberation Sans',sans-serif;font-size:33px;line-height:37.9px;color:#000;font-weight:400;white-space:pre;">Chairs</div><div style="position:absolute;right:1437.5px;top:645.6px;font-family:'Liberation Sans',sans-serif;font-size:33px;line-height:37.9px;color:#000;font-weight:400;white-space:pre;text-align:right;">2</div><div style="position:absolute;left:1269.5px;top:645.6px;font-family:'Liberation Sans',sans-serif;font-size:33px;line-height:37.9px;color:#000;font-weight:400;white-space:pre;">Office Chair</div><div style="position:absolute;right:931.5px;top:645.6px;font-family:'Liberation Sans',sans-serif;font-size:33px;line-height:37.9px;color:#000;font-weight:400;white-space:pre;text-align:right;">50</div><div style="position:absolute;right:678.5px;top:645.6px;font-family:'Liberation Sans',sans-serif;font-size:33px;line-height:37.9px;color:#000;font-weight:400;white-space:pre;text-align:right;">90</div><div style="position:absolute;right:425.5px;top:645.6px;font-family:'Liberation Sans',sans-serif;font-size:33px;line-height:37.9px;color:#000;font-weight:400;white-space:pre;text-align:right;">40</div><div style="position:absolute;left:2281.5px;top:645.6px;font-family:'Liberation Sans',sans-serif;font-size:33px;line-height:37.9px;color:#000;font-weight:400;white-space:pre;">Chairs</div><div style="position:absolute;right:1437.5px;top:698.6px;font-family:'Liberation Sans',sans-serif;font-size:33px;line-height:37.9px;color:#000;font-weight:400;white-space:pre;text-align:right;">3</div><div style="position:absolute;left:1269.5px;top:698.6px;font-family:'Liberation Sans',sans-serif;font-size:33px;line-height:37.9px;color:#000;font-weight:400;white-space:pre;">Plastic Table</div><div style="position:absolute;right:931.5px;top:698.6px;font-family:'Liberation Sans',sans-serif;font-size:33px;line-height:37.9px;color:#000;font-weight:400;white-space:pre;text-align:right;">60</div><div style="position:absolute;right:678.5px;top:698.6px;font-family:'Liberation Sans',sans-serif;font-size:33px;line-height:37.9px;color:#000;font-weight:400;white-space:pre;text-align:right;">100</div><div style="position:absolute;right:425.5px;top:698.6px;font-family:'Liberation Sans',sans-serif;font-size:33px;line-height:37.9px;color:#000;font-weight:400;white-space:pre;text-align:right;">80</div><div style="position:absolute;left:2281.5px;top:698.6px;font-family:'Liberation Sans',sans-serif;font-size:33px;line-height:37.9px;color:#000;font-weight:400;white-space:pre;">Tables</div><div style="position:absolute;right:1437.5px;top:751.6px;font-family:'Liberation Sans',sans-serif;font-size:33px;line-height:37.9px;color:#000;font-weight:400;white-space:pre;text-align:right;">4</div><div style="position:absolute;left:1269.5px;top:751.6px;font-family:'Liberation Sans',sans-serif;font-size:33px;line-height:37.9px;color:#000;font-weight:400;white-space:pre;">Coffe Table</div><div style="position:absolute;right:931.5px;top:751.6px;font-family:'Liberation Sans',sans-serif;font-size:33px;line-height:37.9px;color:#000;font-weight:400;white-space:pre;text-align:right;">40</div><div style="position:absolute;right:678.5px;top:751.6px;font-family:'Liberation Sans',sans-serif;font-size:33px;line-height:37.9px;color:#000;font-weight:400;white-space:pre;text-align:right;">100</div><div style="position:absolute;right:425.5px;top:751.6px;font-family:'Liberation Sans',sans-serif;font-size:33px;line-height:37.9px;color:#000;font-weight:400;white-space:pre;text-align:right;">40</div><div style="position:absolute;left:2281.5px;top:751.6px;font-family:'Liberation Sans',sans-serif;font-size:33px;line-height:37.9px;color:#000;font-weight:400;white-space:pre;">Tables</div><div style="position:absolute;right:1437.5px;top:804.6px;font-family:'Liberation Sans',sans-serif;font-size:33px;line-height:37.9px;color:#000;font-weight:400;white-space:pre;text-align:right;">5</div><div style="position:absolute;left:1269.5px;top:804.6px;font-family:'Liberation Sans',sans-serif;font-size:33px;line-height:37.9px;color:#000;font-weight:400;white-space:pre;">Office Desk</div><div style="position:absolute;right:931.5px;top:804.6px;font-family:'Liberation Sans',sans-serif;font-size:33px;line-height:37.9px;color:#000;font-weight:400;white-space:pre;text-align:right;">120</div><div style="position:absolute;right:678.5px;top:804.6px;font-family:'Liberation Sans',sans-serif;font-size:33px;line-height:37.9px;color:#000;font-weight:400;white-space:pre;text-align:right;">90</div><div style="position:absolute;right:425.5px;top:804.6px;font-family:'Liberation Sans',sans-serif;font-size:33px;line-height:37.9px;color:#000;font-weight:400;white-space:pre;text-align:right;">80</div><div style="position:absolute;left:2281.5px;top:804.6px;font-family:'Liberation Sans',sans-serif;font-size:33px;line-height:37.9px;color:#000;font-weight:400;white-space:pre;">Desks</div><div style="position:absolute;right:1437.5px;top:857.6px;font-family:'Liberation Sans',sans-serif;font-size:33px;line-height:37.9px;color:#000;font-weight:400;white-space:pre;text-align:right;">6</div><div style="position:absolute;left:1269.5px;top:857.6px;font-family:'Liberation Sans',sans-serif;font-size:33px;line-height:37.9px;color:#000;font-weight:400;white-space:pre;">Side Table</div><div style="position:absolute;right:931.5px;top:857.6px;font-family:'Liberation Sans',sans-serif;font-size:33px;line-height:37.9px;color:#000;font-weight:400;white-space:pre;text-align:right;">40</div><div style="position:absolute;right:678.5px;top:857.6px;font-family:'Liberation Sans',sans-serif;font-size:33px;line-height:37.9px;color:#000;font-weight:400;white-space:pre;text-align:right;">50</div><div style="position:absolute;right:425.5px;top:857.6px;font-family:'Liberation Sans',sans-serif;font-size:33px;line-height:37.9px;color:#000;font-weight:400;white-space:pre;text-align:right;">40</div><div style="position:absolute;left:2281.5px;top:857.6px;font-family:'Liberation Sans',sans-serif;font-size:33px;line-height:37.9px;color:#000;font-weight:400;white-space:pre;">Tables</div><div style="position:absolute;left:1008px;top:634px;width:1635px;height:2px;background:#4e77e2"></div><div style="position:absolute;left:1008px;top:686px;width:1635px;height:2.5px;background:#4e77e2"></div><div style="position:absolute;left:1008px;top:633.5px;width:253px;height:55.5px;box-sizing:border-box;border:3px solid #4e77e2;border-top-width:5px;border-bottom-width:5px;border-right-width:5px"></div><div style="position:absolute;left:2644px;top:417px;width:29px;height:60px;background:#f8f9fa"></div><div style="position:absolute;left:2644px;top:476px;width:29px;height:1px;background:#e3e3e3"></div><div style="position:absolute;left:2644px;top:477px;width:29px;height:432px;background:#ffffff"></div><div style="position:absolute;left:2648px;top:479px;width:23px;height:66px;background:#dadce0;border-radius:12px"></div><div style="position:absolute;left:2644px;top:830px;width:29px;height:78px;background:#f8f9fa;border-top:1px solid #e6e6e6"></div><div style="position:absolute;left:2644px;top:869px;width:29px;height:1px;background:#e6e6e6"></div><svg style="position:absolute;left:0;top:0;overflow:visible" width="1" height="1"><path d="M2652,852 H2666 L2659.0,844 Z" fill="#9aa0a6"/></svg><svg style="position:absolute;left:0;top:0;overflow:visible" width="1" height="1"><path d="M2652,884.5 H2666 L2659.0,892.5 Z" fill="#9aa0a6"/></svg><div style="position:absolute;left:893px;top:909px;width:1780px;height:28px;background:#ffffff"></div><div style="position:absolute;left:2566px;top:909px;width:78px;height:28px;background:#f8f9fa"></div><div style="position:absolute;left:893px;top:909px;width:112px;height:28px;background:#f8f8f8"></div><div style="position:absolute;left:1005px;top:909px;width:2px;height:28px;background:#e6e6e6"></div><div style="position:absolute;left:1010px;top:912px;width:381px;height:23px;background:#dadce0;border-radius:12px"></div><div style="position:absolute;left:2566px;top:909px;width:1px;height:28px;background:#e6e6e6"></div><div style="position:absolute;left:2605px;top:909px;width:1px;height:28px;background:#e6e6e6"></div><div style="position:absolute;left:2643px;top:909px;width:1px;height:28px;background:#e6e6e6"></div><svg style="position:absolute;left:0;top:0;overflow:visible" width="1" height="1">
<path d="M2580,923 L2588,916 V930 Z" fill="#9aa0a6"/>
<path d="M2627,923 L2619,916 V930 Z" fill="#9aa0a6"/>
</svg><div style="position:absolute;left:893px;top:937px;width:1781px;height:100px;background:#f1f3f4;border-bottom-left-radius:16px;border-top:1px solid #e3e3e3;box-sizing:border-box"></div><div style="position:absolute;left:1020px;top:982.2px;width:26.5px;height:5px;background:#6b6b6b"></div><div style="position:absolute;left:1030.7px;top:972px;width:5px;height:25.5px;background:#6b6b6b"></div><div style="position:absolute;left:1095px;top:972.5px;width:31px;height:4.6px;background:#6b6b6b"></div><div style="position:absolute;left:1095px;top:980.1px;width:31px;height:4.6px;background:#6b6b6b"></div><div style="position:absolute;left:1095px;top:987.7px;width:31px;height:4.6px;background:#6b6b6b"></div><div style="position:absolute;left:1095px;top:995.3px;width:31px;height:4.6px;background:#6b6b6b"></div><div style="position:absolute;left:1176px;top:938px;width:8px;height:99px;background:linear-gradient(90deg,rgba(0,0,0,0),rgba(0,0,0,0.06))"></div><div style="position:absolute;left:1183.5px;top:938px;width:238.5px;height:99px;background:#ffffff"></div><div style="position:absolute;left:1224px;top:966.2px;font-family:'Liberation Sans',sans-serif;font-size:35px;line-height:40.2px;color:#4a7a35;font-weight:400;white-space:pre;-webkit-text-stroke:0.7px #4a7a35;letter-spacing:0.7px">Sheet1</div><svg style="position:absolute;left:0;top:0;overflow:visible" width="1" height="1"><path d="M1361.4,980 H1381.5 L1371.45,990.7 Z" fill="#4a7a35"/></svg><div style="position:absolute;left:1422px;top:938px;width:7px;height:99px;background:linear-gradient(90deg,rgba(0,0,0,0.06),rgba(0,0,0,0))"></div><div style="position:absolute;left:1463.5px;top:966.2px;font-family:'Liberation Sans',sans-serif;font-size:35px;line-height:40.2px;color:#5f6368;font-weight:400;white-space:pre;-webkit-text-stroke:0.7px #5f6368;letter-spacing:1.5px">Sheet2</div><svg style="position:absolute;left:0;top:0;overflow:visible" width="1" height="1"><path d="M1605,980 H1625.8 L1615.4,990.7 Z" fill="#80868b"/></svg><div style="position:absolute;left:1667px;top:938px;width:1px;height:99px;background:#e3e3e3"></div><div style="position:absolute;left:2336px;top:951.5px;width:184px;height:73.5px;box-sizing:border-box;background:#fff;border:2px solid #dadce0;border-radius:10px"></div><div style="position:absolute;left:2353px;top:973.0px;font-family:'Liberation Sans',sans-serif;font-size:26.5px;line-height:30.5px;color:#202124;font-weight:400;white-space:pre;">Sum: 182</div><svg style="position:absolute;left:0;top:0;overflow:visible" width="1" height="1"><path d="M2485,983 H2506 L2495.5,993.4 Z" fill="#5f6368"/></svg><svg style="position:absolute;left:2576px;top:963px" width="46" height="54" viewBox="0 0 46 54">
<path d="M6,0 H40 A6,6 0 0 1 46,6 V39 A6,6 0 0 1 40,45 H30 L23,52 L16,45 H6 A6,6 0 0 1 0,39 V6 A6,6 0 0 1 6,0 Z" fill="#757575"/>
<path d="M23,8 C24.5,17 27,20 36,22.5 C27,25 24.5,28 23,37 C21.5,28 19,25 10,22.5 C19,20 21.5,17 23,8 Z" fill="#fff"/>
</svg></body></html>
